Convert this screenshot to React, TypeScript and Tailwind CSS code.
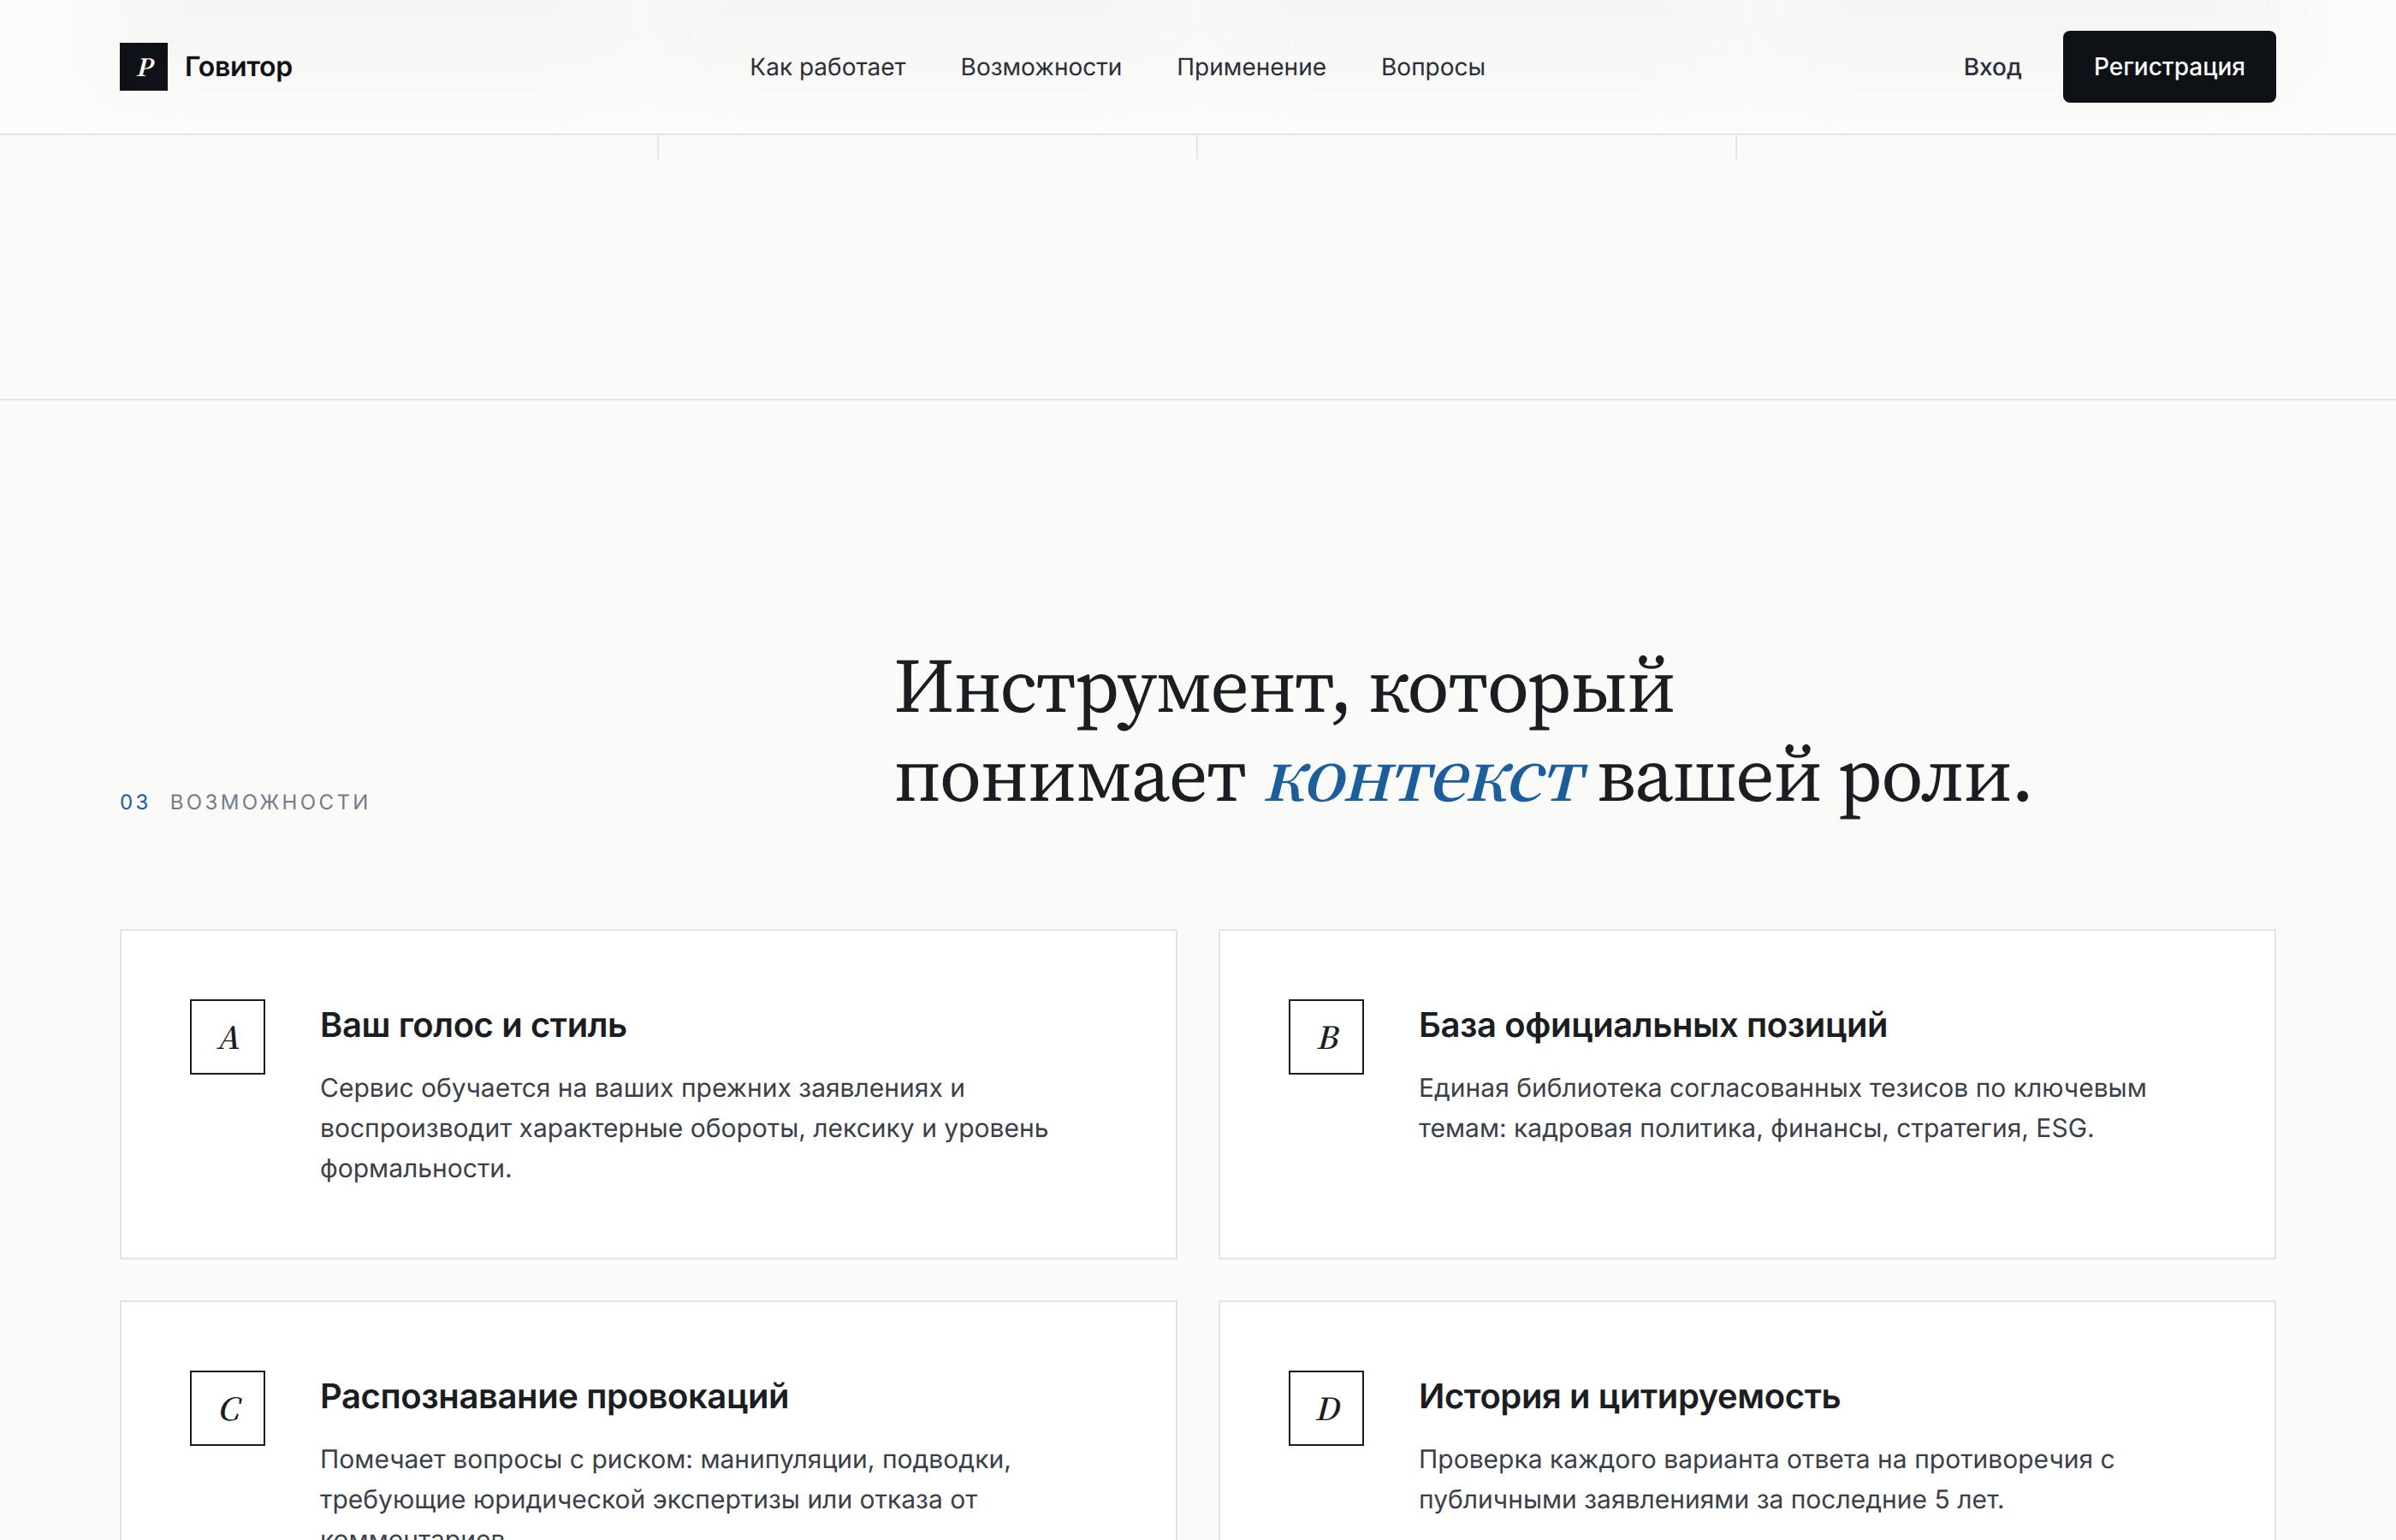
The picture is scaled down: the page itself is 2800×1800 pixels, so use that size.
const navLinks = [
  { label: "Как работает", href: "#how" },
  { label: "Возможности", href: "#features" },
  { label: "Применение", href: "#cases" },
  { label: "Вопросы", href: "#faq" },
];

const features = [
  {
    letter: "A",
    title: "Ваш голос и стиль",
    text: "Сервис обучается на ваших прежних заявлениях и воспроизводит характерные обороты, лексику и уровень формальности.",
  },
  {
    letter: "B",
    title: "База официальных позиций",
    text: "Единая библиотека согласованных тезисов по ключевым темам: кадровая политика, финансы, стратегия, ESG.",
  },
  {
    letter: "C",
    title: "Распознавание провокаций",
    text: "Помечает вопросы с риском: манипуляции, подводки, требующие юридической экспертизы или отказа от комментариев.",
  },
  {
    letter: "D",
    title: "История и цитируемость",
    text: "Проверка каждого варианта ответа на противоречия с публичными заявлениями за последние 5 лет.",
  },
];

function Header() {
  return (
    <header className="sticky top-0 z-10 border-b-2 border-[#e4e5df] bg-[#fbfbf9]">
      <div className="absolute inset-0 grid grid-cols-4 gap-16 overflow-hidden px-[140px]" aria-hidden="true">
        <div className="-mt-20 h-40 bg-[#f5f5f4] blur-2xl" />
        <div className="-mt-20 h-40 bg-[#f5f5f4] blur-2xl" />
        <div className="-mt-20 h-40 bg-[#f5f5f4] blur-2xl" />
        <div className="-mt-20 h-40 bg-[#f5f5f4] blur-2xl" />
      </div>
      <div className="relative flex items-center justify-between px-[140px] py-9">
        <a href="#" className="flex items-center gap-5">
          <span className="flex size-14 items-center justify-center bg-[#0e1116] font-['Noto_Serif_CJK_SC','Source_Serif_4','Liberation_Serif',serif] text-[28px] leading-none font-bold italic text-white">
            P
          </span>
          <span className="text-[32px] font-semibold tracking-[-0.01em] text-[#0e1116]">Говитор</span>
        </a>
        <nav className="flex gap-16 text-[28px] text-[#2b2f3a]">
          {navLinks.map((link) => (
            <a key={link.href} href={link.href}>
              {link.label}
            </a>
          ))}
        </nav>
        <div className="flex items-center gap-6 text-[28px] font-medium">
          <a href="#login" className="px-6 text-[#2b2f3a]">
            Вход
          </a>
          <button type="button" className="h-21 rounded-lg bg-[#0e1116] px-9 text-[#fafaf8]">
            Регистрация
          </button>
        </div>
      </div>
    </header>
  );
}

function FeatureCard({ letter, title, text }: { letter: string; title: string; text: string }) {
  return (
    <article className="flex gap-16 border-2 border-[#e4e5df] bg-white p-20">
      <span className="flex size-22 shrink-0 items-center justify-center border-2 border-[#1a1d21] font-['Noto_Serif_CJK_SC','Source_Serif_4','Liberation_Serif',serif] text-[36px] leading-none font-semibold italic">
        {letter}
      </span>
      <div>
        <h3 className="mb-[22px] text-[40px] font-semibold leading-[59px] tracking-[-0.01em]">{title}</h3>
        <p className="text-[30px] leading-[47px] text-[#3a3f4a]">{text}</p>
      </div>
    </article>
  );
}

export default function App() {
  return (
    <div className="min-h-screen bg-[#fafaf8] font-['Inter',sans-serif] text-[#1a1d21] [font-optical-sizing:none] [text-rendering:geometricPrecision]">
      <Header />
      <section id="how" className="px-[140px] pb-[280px]">
        <div className="grid h-7 grid-cols-4 divide-x-2 divide-[#e4e5df]">
          <div />
          <div />
          <div />
          <div />
        </div>
      </section>
      <section id="features" className="border-t-2 border-[#e4e5df] px-[140px] pt-[282px]">
        <div className="mb-32 grid grid-cols-[1fr_2fr] items-end gap-24">
          <p className="flex gap-[22px] text-2xl leading-10 tracking-[0.14em] text-[#747c8a]">
            <span className="text-[#1b5e9e]">03</span>
            <span>ВОЗМОЖНОСТИ</span>
          </p>
          <h2 className="font-['Source_Serif_4','Liberation_Serif',serif] text-[90px] leading-[104px] tracking-[-0.02em]">
            Инструмент, который
            <br />
            понимает{" "}
            <em className="font-['Noto_Serif_CJK_SC','Source_Serif_4',serif] text-[80px] leading-none font-semibold text-[#1b5e9e]">
              контекст
            </em>{" "}
            вашей роли.
          </h2>
        </div>
        <div className="grid grid-cols-2 gap-12">
          {features.map((feature) => (
            <FeatureCard key={feature.letter} {...feature} />
          ))}
        </div>
      </section>
    </div>
  );
}
